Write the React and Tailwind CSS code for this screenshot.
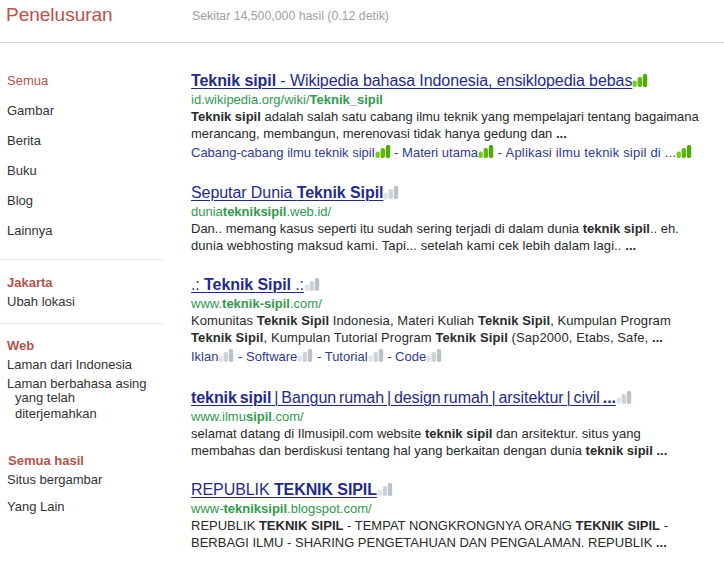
const Signal = ({ on }) => (
  <svg width="16" height="15" viewBox="0 0 16 15" className="inline-block align-[-2px] shrink-0" style={{ filter: "blur(0.5px)" }}>
    <rect x="0.6" y="7.5" width="4.2" height="6.5" rx="1.8" fill={on ? "#78cc1c" : "#e0e3e6"} />
    <rect x="5.6" y="4" width="4.4" height="10" rx="1.8" fill={on ? "#5cba0c" : "#cfd3d7"} />
    <rect x="10.8" y="1" width="4.4" height="13" rx="1.8" fill={on ? "#4aac04" : "#bcc2c8"} />
  </svg>
);

const B = ({ children }) => <b className="font-bold">{children}</b>;
const Title = ({ children, on, tight }) => (
  <div className={"h-[22px] text-[16px] leading-[22px] text-[#1f2a8e] whitespace-nowrap tracking-[-0.08px] " + (tight ? "[word-spacing:-1.4px]" : "")}>
    <span className="underline decoration-1 underline-offset-2">{children}</span>
    <Signal on={on} />
  </div>
);
const Url = ({ children }) => (
  <div className="h-[15px] text-[13px] leading-[15px] text-[#2f9a4c] whitespace-nowrap">{children}</div>
);
const Snip = ({ children }) => (
  <div className="mt-[2px] text-[13px] leading-[16.5px] text-[#2a2a2a] whitespace-nowrap">{children}</div>
);
const Links = ({ items, on, wideLast }) => (
  <div className="mt-[2px] h-[18px] text-[13px] leading-[18px] text-[#2f3a94] whitespace-nowrap">
    {items.map((t, i) => (
      <span key={t}>
        {i > 0 && " - "}
        <span className={wideLast && i === items.length - 1 ? "tracking-[0.2px]" : ""}>{t}</span>
        <Signal on={on} />
      </span>
    ))}
  </div>
);
const Nav = ({ children, active }) => (
  <div className={"h-[30px] leading-[30px] text-[13px] " + (active ? "text-[#b5534c]" : "text-[#333]")}>{children}</div>
);
const Head = ({ children }) => (
  <div className="text-[13px] leading-[19px] font-bold text-[#b5534c]">{children}</div>
);
const Item = ({ children }) => (
  <div className="text-[13px] leading-[19px] text-[#333]">{children}</div>
);

export default function App() {
  return (
    <div className="w-[724px] h-[562px] bg-white overflow-hidden" style={{ fontFamily: '"Liberation Sans", Arial, sans-serif' }}>
      <header className="h-[43px] border-b border-[#dcdcdc] flex items-start">
        <div className="w-[192px] pl-[6px] pt-[3px] text-[19px] leading-[24px] text-[#c0504a]">Penelusuran</div>
        <div className="pt-[9px] text-[12.3px] leading-[15px] text-[#a0a0a0]">Sekitar 14,500,000 hasil (0.12 detik)</div>
      </header>
      <div className="flex">
        <aside className="w-[163px] shrink-0 mr-[28px] pt-[23px]">
          <div className="pl-[7px] pb-[13px] border-b border-[#ececec]">
            <Nav active>Semua</Nav>
            <Nav>Gambar</Nav>
            <Nav>Berita</Nav>
            <Nav>Buku</Nav>
            <Nav>Blog</Nav>
            <Nav>Lainnya</Nav>
          </div>
          <div className="pl-[7px] pt-[13px] pb-[12px] border-b border-[#ececec]">
            <Head>Jakarta</Head>
            <Item>Ubah lokasi</Item>
          </div>
          <div className="pl-[7px] pt-[12px]">
            <Head>Web</Head>
            <Item>Laman dari Indonesia</Item>
            <Item>Laman berbahasa asing</Item>
            <div className="pl-[8px] -mt-[3px] text-[13px] leading-[15.5px] text-[#333]">yang telah<br />diterjemahkan</div>
          </div>
          <div className="pl-[8px] pt-[30px]">
            <Head>Semua hasil</Head>
          </div>
          <div className="pl-[7px]">
            <Item>Situs bergambar</Item>
            <div className="mt-[8px]"><Item>Yang Lain</Item></div>
          </div>
        </aside>
        <main className="pt-[27px] flex-1">
          <section className="h-[112px]">
            <Title on><B>Teknik sipil</B> - Wikipedia bahasa Indonesia, ensiklopedia bebas</Title>
            <Url>id.wikipedia.org/wiki/<B>Teknik_sipil</B></Url>
            <Snip><B>Teknik sipil</B> adalah salah satu cabang ilmu teknik yang mempelajari tentang bagaimana<br />merancang, membangun, merenovasi tidak hanya gedung dan <B>...</B></Snip>
            <Links on wideLast items={["Cabang-cabang ilmu teknik sipil", "Materi utama", "Aplikasi ilmu teknik sipil di ..."]} />
          </section>
          <section className="h-[92px]">
            <Title>Seputar Dunia <B>Teknik Sipil</B></Title>
            <Url>dunia<B>tekniksipil</B>.web.id/</Url>
            <Snip>Dan.. memang kasus seperti itu sudah sering terjadi di dalam dunia <B>teknik sipil</B>.. eh.<br /><span className="tracking-[0.08px]">dunia webhosting maksud kami. Tapi... setelah kami cek lebih dalam lagi.. <B>...</B></span></Snip>
          </section>
          <section className="h-[113px]">
            <Title>.: <B>Teknik Sipil</B> .:</Title>
            <Url>www.<B>teknik-sipil</B>.com/</Url>
            <Snip><span className="tracking-[0.08px]">Komunitas <B>Teknik Sipil</B> Indonesia, Materi Kuliah <B>Teknik Sipil</B>, Kumpulan Program</span><br /><span className="tracking-[0.1px]"><B>Teknik Sipil</B>, Kumpulan Tutorial Program <B>Teknik Sipil</B> (Sap2000, Etabs, Safe, <B>...</B></span></Snip>
            <Links items={["Iklan", "Software", "Tutorial", "Code"]} />
          </section>
          <section className="h-[92px]">
            <Title tight><B>teknik sipil</B> | Bangun rumah | design rumah | arsitektur | civil <B>...</B></Title>
            <Url>www.ilmu<B>sipil</B>.com/</Url>
            <Snip><span className="tracking-[0.03px]">selamat datang di Ilmusipil.com website <B>teknik sipil</B> dan arsitektur. situs yang</span><br />membahas dan berdiskusi tentang hal yang berkaitan dengan dunia <B>teknik sipil</B> <B>...</B></Snip>
          </section>
          <section>
            <Title>REPUBLIK <B>TEKNIK SIPIL</B></Title>
            <Url>www-<B>tekniksipil</B>.blogspot.com/</Url>
            <Snip>REPUBLIK <B>TEKNIK SIPIL</B> - TEMPAT NONGKRONGNYA ORANG <B>TEKNIK SIPIL</B> -<br />BERBAGI ILMU - SHARING PENGETAHUAN DAN PENGALAMAN. REPUBLIK <B>...</B></Snip>
          </section>
        </main>
      </div>
    </div>
  );
}
